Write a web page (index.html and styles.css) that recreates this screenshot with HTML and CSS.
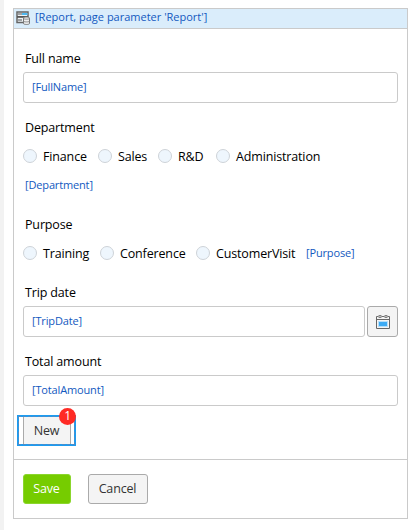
FILE: index.html
```html
<!DOCTYPE html>
<html lang="en">
<head>
<meta charset="utf-8">
<title>Report</title>
<link rel="stylesheet" href="styles.css">
</head>
<body>
<main class="panel">
  <header class="panel-header">
    <svg class="source-icon" width="15" height="14" viewBox="0 0 15 14">
      <path d="M1 1h11v10.500H1z" fill="#eef3f6" stroke="#666" stroke-width="1.500"/>
      <path d="M2 3h4M2 9h4" stroke="#555" stroke-width="1.200"/>
      <path d="M6 2h5.500v2H6z" fill="#4eb8f0"/>
      <path d="M1 5.900h11" stroke="#555" stroke-width="1.800"/>
      <path d="M7.500 7c0-1.300 6-1.300 6 0v5.500c0 1.300-6 1.300-6 0z" fill="#eee" stroke="#777"/>
      <path d="M7.500 7.300c0 1.200 6 1.200 6 0M7.500 10c0 1.200 6 1.200 6 0" fill="none" stroke="#888"/>
    </svg>
    <span class="binding header-binding">[Report, page parameter 'Report']</span>
  </header>
  <section class="fields">
    <div class="label"><span>Full name</span></div>
    <div class="input"><span class="binding">[FullName]</span></div>

    <div class="label department"><span>Department</span></div>
    <div class="radios">
      <label class="radio w-finance"><i></i><span>Finance</span></label>
      <label class="radio w-sales"><i></i><span>Sales</span></label>
      <label class="radio w-rd"><i></i><span>R&amp;D</span></label>
      <label class="radio"><i></i><span>Administration</span></label>
    </div>
    <div class="binding-row"><span class="binding">[Department]</span></div>

    <div class="label purpose"><span>Purpose</span></div>
    <div class="radios">
      <label class="radio w-training"><i></i><span>Training</span></label>
      <label class="radio w-conference"><i></i><span>Conference</span></label>
      <label class="radio w-visit"><i></i><span>CustomerVisit</span></label>
      <span class="binding raised">[Purpose]</span>
    </div>

    <div class="label spaced"><span>Trip date</span></div>
    <div class="date-row">
      <div class="input"><span class="binding">[TripDate]</span></div>
      <button class="date-button" aria-label="Pick date">
        <svg width="14" height="14" viewBox="0 0 14 14">
          <path d="M.5 1.500h13v12H.5zM0 4.500h14" fill="none" stroke="#666"/>
          <path d="M2 1.500c0-1.300 4-1.300 4 0s-4 1.300-4 0zM8 1.500c0-1.300 4-1.300 4 0s-4 1.300-4 0z" fill="#ccc" stroke="#777"/>
          <path d="M2 6h10v6H2z" fill="#b5def9"/>
          <path d="M3 7h8v4H3z" fill="#3cabf5"/>
        </svg>
      </button>
    </div>

    <div class="label total"><span>Total amount</span></div>
    <div class="input"><span class="binding">[TotalAmount]</span></div>
    <div class="callout">
      <button class="button new">New</button>
      <span class="badge">1</span>
    </div>
  </section>
  <footer class="actions">
    <button class="button save">Save</button>
    <button class="button cancel">Cancel</button>
  </footer>
</main>
</body>
</html>
```
FILE: styles.css
```css
* { box-sizing: border-box; }

body {
  margin: 0;
  height: 530px;
  overflow: hidden;
  padding: 8px 8px 0 9px;
  border-left: 4px solid #f2f2f2;
  background: #fff;
  color: #000;
  font: 12.5px/18px "Open Sans", "Noto Sans", sans-serif;
  letter-spacing: -0.15px;
}

.panel {
  width: 395px;
  height: 511px;
  border: 1px solid #cacaca;
}

.panel-header {
  display: flex;
  height: 20px;
  padding: 2px 0 0 2px;
  gap: 4px;
  background: #daedfb;
  border-bottom: 1px solid #cacaca;
}

.binding {
  color: #1259c0;
  font-size: 11px;
  line-height: 15px;
  letter-spacing: -0.15px;
  white-space: nowrap;
}

.header-binding {
  margin-top: -2px;
  letter-spacing: 0;
}

.fields {
  height: 430px;
  padding: 16px 9px 0;
}

.label {
  display: flex;
  align-items: center;
  height: 27px;
  padding-left: 2px;
}

.spaced { margin-top: 12px; }
.total { margin-top: 11px; }

.department {
  height: 26px;
  margin: 12px 0 1px;
}

.purpose {
  height: 26px;
  margin: 12px 0 1px;
}

.input {
  display: flex;
  align-items: center;
  flex: 1;
  height: 31px;
  padding: 0 0 2px 8px;
  border: 1px solid #cacaca;
  border-radius: 3px;
}

.radios {
  display: flex;
  align-items: center;
  height: 28px;
}

.radio {
  display: flex;
  align-items: center;
  gap: 6px;
  white-space: nowrap;
}

.radio span { padding-top: 1px; }

.radio i {
  width: 14px;
  height: 14px;
  border: 1px solid #ced3d8;
  border-radius: 50%;
  background: #eef6fd;
}

.w-finance { width: 75px; }
.w-sales { width: 60px; }
.w-rd { width: 58px; }
.w-training { width: 77px; }
.w-conference { width: 96px; }
.w-visit { width: 110px; }

.raised { padding-bottom: 2px; }

.binding-row {
  display: flex;
  align-items: center;
  height: 30px;
  padding: 0 0 2px 2px;
}

.date-row {
  display: flex;
  gap: 2px;
}

.date-button {
  display: flex;
  align-items: center;
  justify-content: center;
  width: 31px;
  height: 31px;
  padding: 1px 0 0;
  border: 1px solid #aaa;
  border-radius: 3px;
  background: #f4f4f4;
}

.button {
  height: 30px;
  padding: 0 1px 0 0;
  border: 1px solid #aaa;
  border-radius: 3px;
  background: #f4f4f4;
  color: #333;
  font: inherit;
  letter-spacing: inherit;
}

.callout {
  position: relative;
  display: flex;
  width: 59px;
  height: 31px;
  margin: 9px 0 0 -6px;
  padding: 0 4px;
  border: 2px solid #1c9cf0;
  outline: 1px dashed rgba(138, 125, 156, 0.5);
  outline-offset: -2px;
}

.new {
  flex: none;
  width: 48px;
  height: 27px;
  border-width: 0 1px;
  border-radius: 0;
}

.badge {
  position: absolute;
  top: -9px;
  right: -2px;
  width: 17px;
  height: 17px;
  border-radius: 50%;
  background: #ff2a24;
  color: #fff;
  font-size: 12px;
  line-height: 16px;
  text-align: center;
  z-index: 1;
}

.actions {
  display: flex;
  gap: 17px;
  height: 59px;
  padding: 14px 9px;
  border-top: 1px solid #cacaca;
}

.save {
  width: 48px;
  border-color: #8bd62d;
  background: #76cc00;
  color: #fff;
}

.cancel { width: 60px; }
```
